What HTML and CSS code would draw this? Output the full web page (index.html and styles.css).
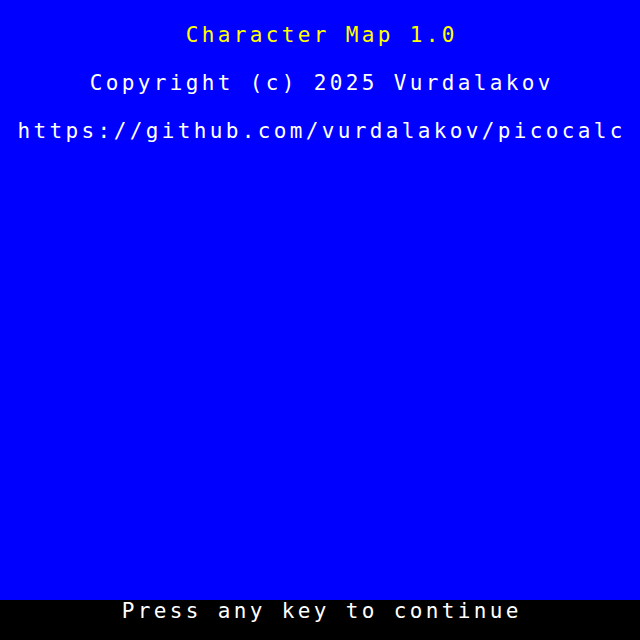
FILE: index.html
```html
<!DOCTYPE html>
<html lang="en">
<head>
<meta charset="utf-8">
<title>Character Map 1.0</title>
<link rel="stylesheet" href="styles.css">
</head>
<body>
<div class="screen">
  <main class="info">
    <div class="line title">Character Map 1.0</div>
    <div class="line">Copyright (c) 2025 Vurdalakov</div>
    <div class="line">https://github.com/vurdalakov/picocalc</div>
  </main>
  <footer class="status">
    <div class="line">Press any key to continue</div>
  </footer>
</div>
</body>
</html>
```
FILE: styles.css
```css
html, body {
  margin: 0;
  padding: 0;
  background: #000000;
}
.screen {
  width: 640px;
  height: 640px;
  display: flex;
  flex-direction: column;
  font-family: "DejaVu Sans Mono", "Liberation Mono", monospace;
  font-size: 21px;
  color: #ffffff;
}
.info {
  flex: 1;
  background: #0000ff;
  padding-top: 11px;
  display: flex;
  flex-direction: column;
  align-items: center;
}
.line {
  line-height: 48px;
  letter-spacing: 3.36px;
  padding-left: 3.36px;
  white-space: pre;
}
.title {
  color: #ffff00;
}
.status {
  height: 40px;
  background: #000000;
  display: flex;
  justify-content: center;
}
.status .line {
  line-height: 23px;
}
```
